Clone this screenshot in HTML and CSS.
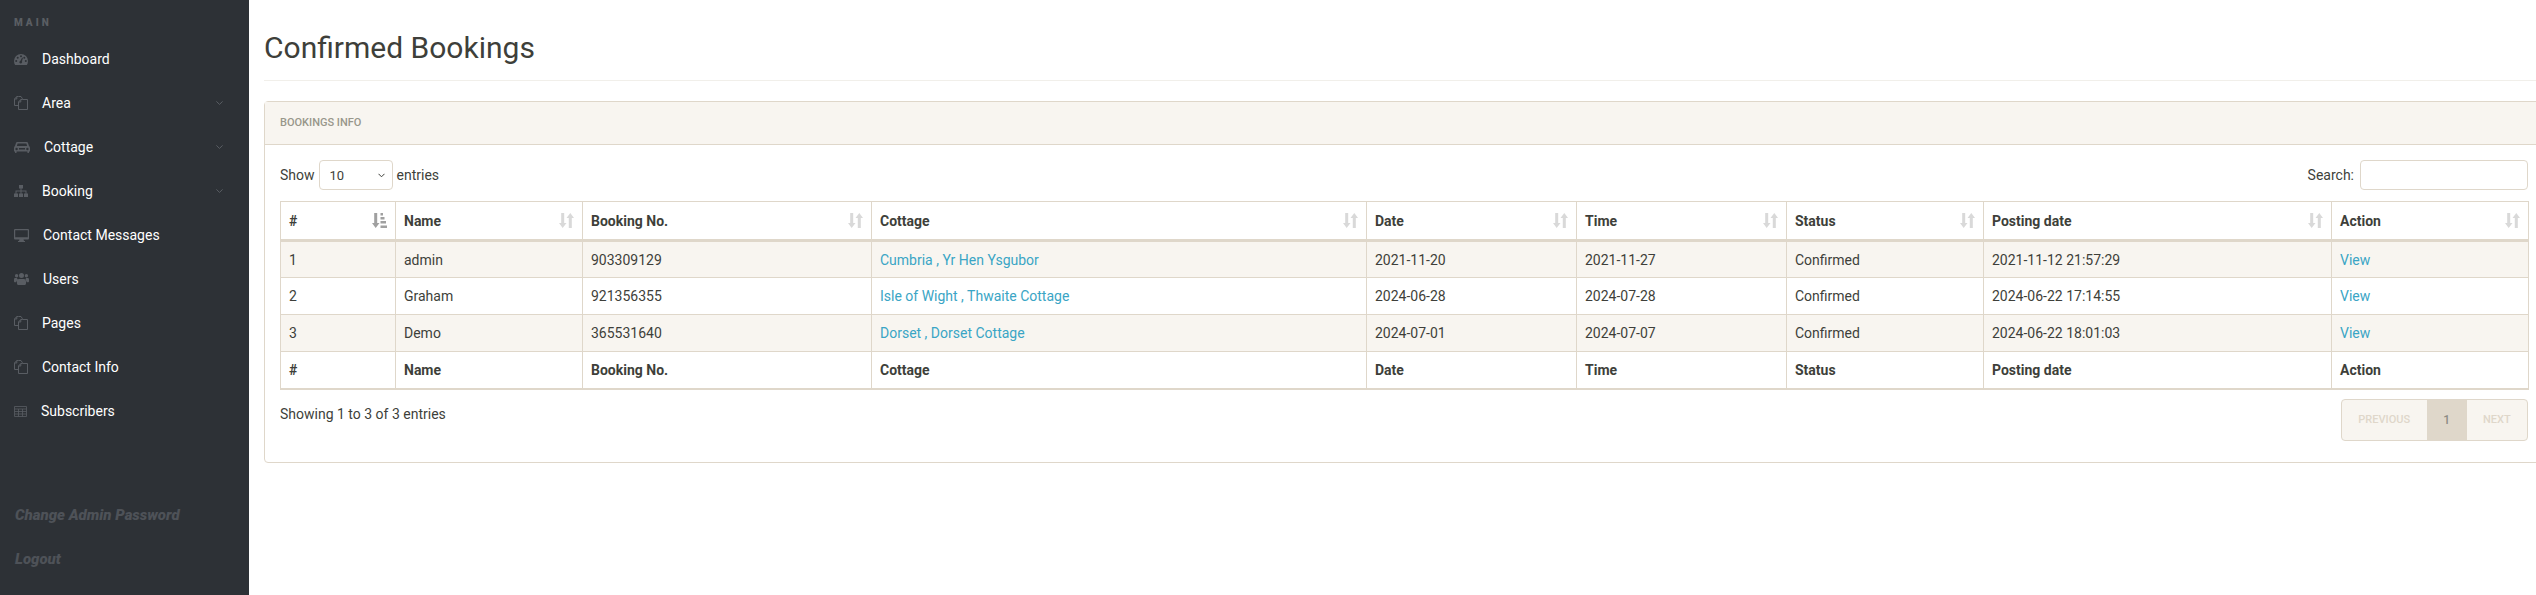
FILE: index.html
```html
<!DOCTYPE html>
<html lang="en">
<head>
<meta charset="utf-8">
<title>Confirmed Bookings</title>
<link rel="stylesheet" href="styles.css">
</head>
<body>
<svg class="defs" width="0" height="0" aria-hidden="true">
  <defs>
    <symbol id="i-files" viewBox="0 0 14 14">
      <path d="M4.500.5H2.800L.5 3v6.500h4M2.800.5V3H.5M4.500.5H7L8.300 2.500V3.500M8.500 3.500H6.800L4.500 6v7.500h9v-10h-5zM6.800 3.500V6H4.500" fill="none" stroke="currentColor" stroke-width="1"/>
    </symbol>
    <symbol id="i-sort" viewBox="0 0 15 15">
      <path d="M2.200 0h3v10H7.500L3.700 15 0 10h2.200zM9.800 15h3V5H15L11.300 0 7.500 5h2.300z" fill="currentColor"/>
    </symbol>
  </defs>
</svg>
<div class="layout">
  <nav class="sidebar">
    <div class="nav-label">MAIN</div>
    <ul class="nav">
      <li class="nav-item"><svg class="ico w14 h11" viewBox="0 0 14 11"><path d="M7 0a7 7 0 0 0-7 7c0 1.500.4 2.900 1.100 4h11.800c.7-1.100 1.100-2.500 1.100-4a7 7 0 0 0-7-7zM2.200 8a1 1 0 1 1 0-2 1 1 0 0 1 0 2zm1.500-3.200a1 1 0 1 1 0-2 1 1 0 0 1 0 2zM7 3.200a1 1 0 1 1 0-2 1 1 0 0 1 0 2zm1 5.300a1.400 1.400 0 0 1-2.700-.3c0-.6.400-1.100 1-1.300l1.900-3.300.7.300-1 3.500c.3.300.400.700.100 1.100zm2.300-3.700a1 1 0 1 1 0-2 1 1 0 0 1 0 2zM11.800 8a1 1 0 1 1 0-2 1 1 0 0 1 0 2z" fill-rule="evenodd"/></svg><span>Dashboard</span></li>
      <li class="nav-item"><svg class="ico w14 h14 line"><use href="#i-files"/></svg><span>Area</span><svg class="chev" viewBox="0 0 7 4"><path d="M.4.400 3.500 3.400 6.600.4"/></svg></li>
      <li class="nav-item"><svg class="ico w16 h11" viewBox="0 0 16 11"><path d="M3.500 0h9c.8 0 1.400.5 1.600 1.200L15 4c.6.500 1 1.100 1 1.900V9.500h-1v.8a.8.8 0 0 1-1.600 0v-.8H2.600v.8a.8.8 0 0 1-1.600 0v-.8H0V5.900C0 5.100.4 4.500 1 4l.9-2.800C2.100.5 2.700 0 3.500 0zM3.600 1.400 2.900 3.900h10.200l-.7-2.500zM2.600 8.200a1.200 1.200 0 1 0 0-2.400 1.200 1.200 0 0 0 0 2.400zm10.800 0a1.200 1.200 0 1 0 0-2.400 1.200 1.200 0 0 0 0 2.400zM5 6v1.400h6V6z" fill-rule="evenodd"/></svg><span>Cottage</span><svg class="chev" viewBox="0 0 7 4"><path d="M.4.400 3.500 3.400 6.600.4"/></svg></li>
      <li class="nav-item"><svg class="ico w14 h12" viewBox="0 0 14 12"><rect x="5" width="4" height="3.500"/><rect y="8.500" width="4" height="3.500"/><rect x="5" y="8.500" width="4" height="3.500"/><rect x="10" y="8.500" width="4" height="3.500"/><path d="M6.500 3h1v2.500H12.500v3.500h-1V6.500h-4V9h-1V6.500h-4V9h-1V5.500h5z"/></svg><span>Booking</span><svg class="chev" viewBox="0 0 7 4"><path d="M.4.400 3.500 3.400 6.600.4"/></svg></li>
      <li class="nav-item"><svg class="ico w15 h13" viewBox="0 0 15 13"><path d="M1 0h13a1 1 0 0 1 1 1v8.500a1 1 0 0 1-1 1H9.500l.5 1.500h1v1H4v-1h1l.5-1.500H1a1 1 0 0 1-1-1V1a1 1 0 0 1 1-1zm.2 1.200v7h12.600v-7z" fill-rule="evenodd"/></svg><span>Contact Messages</span></li>
      <li class="nav-item"><svg class="ico w15 h12" viewBox="0 0 15 12"><path d="M2.600 1a1.700 1.700 0 1 1 0 3.400 1.700 1.700 0 0 1 0-3.400zm9.800 0a1.700 1.700 0 1 1 0 3.400 1.700 1.700 0 0 1 0-3.400zM7.500 0a2.500 2.500 0 1 1 0 5 2.500 2.500 0 0 1 0-5zM0 6.400C0 5.500.6 5 1.400 5h1.500c.2.800.7 1.500 1.300 2-1 .400-1.700 1.200-1.900 2.200H1C.4 9.200 0 8.800 0 8.200zm15 0c0-.9-.6-1.400-1.400-1.400h-1.500c-.2.800-.7 1.500-1.300 2 1 .400 1.700 1.200 1.900 2.200H14c.6 0 1-.4 1-1zM5 6h5c1.200 0 2 .9 2 2.300v2.200c0 .9-.6 1.500-1.500 1.500h-6C3.600 12 3 11.400 3 10.500V8.300C3 6.900 3.800 6 5 6z"/></svg><span>Users</span></li>
      <li class="nav-item"><svg class="ico w14 h14 line"><use href="#i-files"/></svg><span>Pages</span></li>
      <li class="nav-item"><svg class="ico w14 h14 line"><use href="#i-files"/></svg><span>Contact Info</span></li>
      <li class="nav-item"><svg class="ico w13 h11" viewBox="0 0 13 11"><path d="M.5.500h12v10H.5zM.5 3h12M.5 5.500h12M.5 8h12M4.500 3v7.500M8.500 3v7.500" fill="none" stroke="currentColor" stroke-width=".8"/></svg><span>Subscribers</span></li>
    </ul>
    <ul class="nav-foot">
      <li class="foot-item">Change Admin Password</li>
      <li class="foot-item">Logout</li>
    </ul>
  </nav>
  <main class="main">
    <h1 class="title">Confirmed Bookings</h1>
    <section class="card">
      <header class="card-head">BOOKINGS INFO</header>
      <div class="card-body">
        <div class="controls">
          <label class="length">Show <select class="select"><option>10</option><option>25</option><option>50</option><option>100</option></select> entries</label>
          <label class="search">Search: <input class="input" type="search"></label>
        </div>
        <table class="table">
          <colgroup>
            <col class="c1"><col class="c2"><col class="c3"><col class="c4"><col class="c5"><col class="c6"><col class="c7"><col class="c8"><col class="c9">
          </colgroup>
          <thead>
            <tr>
              <th><div class="th"><span>#</span><svg class="sorted" viewBox="0 0 15 15"><path d="M2.200 0h3v10H7.500L3.700 15 0 10h2.200zM8.500 0H11v2.500H8.500zM8.500 4H12.500v2.500H8.500zM8.500 8H14v2.500H8.500zM8.500 12.500H15V15H8.500z"/></svg></div></th>
              <th><div class="th"><span>Name</span><svg class="sort"><use href="#i-sort"/></svg></div></th>
              <th><div class="th"><span>Booking No.</span><svg class="sort"><use href="#i-sort"/></svg></div></th>
              <th><div class="th"><span>Cottage</span><svg class="sort"><use href="#i-sort"/></svg></div></th>
              <th><div class="th"><span>Date</span><svg class="sort"><use href="#i-sort"/></svg></div></th>
              <th><div class="th"><span>Time</span><svg class="sort"><use href="#i-sort"/></svg></div></th>
              <th><div class="th"><span>Status</span><svg class="sort"><use href="#i-sort"/></svg></div></th>
              <th><div class="th"><span>Posting date</span><svg class="sort"><use href="#i-sort"/></svg></div></th>
              <th><div class="th"><span>Action</span><svg class="sort"><use href="#i-sort"/></svg></div></th>
            </tr>
          </thead>
          <tbody>
            <tr class="odd"><td>1</td><td>admin</td><td>903309129</td><td><a href="#">Cumbria , Yr Hen Ysgubor</a></td><td>2021-11-20</td><td>2021-11-27</td><td>Confirmed</td><td>2021-11-12 21:57:29</td><td><a href="#">View</a></td></tr>
            <tr><td>2</td><td>Graham</td><td>921356355</td><td><a href="#">Isle of Wight , Thwaite Cottage</a></td><td>2024-06-28</td><td>2024-07-28</td><td>Confirmed</td><td>2024-06-22 17:14:55</td><td><a href="#">View</a></td></tr>
            <tr class="odd"><td>3</td><td>Demo</td><td>365531640</td><td><a href="#">Dorset , Dorset Cottage</a></td><td>2024-07-01</td><td>2024-07-07</td><td>Confirmed</td><td>2024-06-22 18:01:03</td><td><a href="#">View</a></td></tr>
          </tbody>
          <tfoot>
            <tr><th>#</th><th>Name</th><th>Booking No.</th><th>Cottage</th><th>Date</th><th>Time</th><th>Status</th><th>Posting date</th><th>Action</th></tr>
          </tfoot>
        </table>
        <div class="below">
          <div class="info">Showing 1 to 3 of 3 entries</div>
          <div class="pager">
            <span class="page off">PREVIOUS</span>
            <span class="page cur">1</span>
            <span class="page off">NEXT</span>
          </div>
        </div>
      </div>
    </section>
  </main>
</div>
</body>
</html>
```
FILE: styles.css
```css
* { box-sizing: border-box; }
html, body { margin: 0; padding: 0; height: 100%; overflow: hidden; background: #fff; }
body { font-family: Roboto, "Liberation Sans", sans-serif; font-size: 14px; color: #3e3f3a; }
.defs { display: block; height: 0; }
.layout { display: flex; height: 595px; }

.sidebar { flex: 0 0 249px; background: #2d3136; display: flex; flex-direction: column; padding-top: 16px; }
.nav-label { font-size: 10px; font-weight: 900; letter-spacing: 3px; color: #5a5e63; padding-left: 14px; line-height: 14px; height: 21px; }
.nav, .nav-foot { list-style: none; margin: 0; padding: 0; }
.nav-item { display: flex; align-items: center; height: 44px; padding-left: 14px; color: #fff; position: relative; }
.ico { fill: #595d63; color: #595d63; flex: none; margin-right: 14px; }
.w13 { width: 13px; }
.w14 { width: 14px; }
.w15 { width: 15px; }
.w16 { width: 16px; }
.h11 { height: 11px; }
.h12 { height: 12px; }
.h13 { height: 13px; }
.h14 { height: 14px; }
.chev { width: 7px; height: 4px; fill: none; stroke: #5a5e63; stroke-width: 1; margin-left: auto; margin-right: 26px; }
.nav-foot { margin-top: 60px; }
.foot-item { height: 44px; line-height: 44px; padding-left: 15px; font-size: 15px; font-weight: 900; font-style: italic; color: #4e5258; }

.main { flex: 1; min-width: 0; padding-left: 15px; overflow: hidden; }
.title { margin: 0; width: 2280px; height: 81px; border-bottom: 1px solid #f1efea; padding-top: 30px; font-size: 30px; line-height: 36px; font-weight: 400; color: #3e3f3a; }
.card { margin-top: 20px; width: 2280px; height: 362px; border: 1px solid #dfd7ca; border-radius: 4px; }
.card-head { height: 43px; background: #f8f5f0; border-bottom: 1px solid #dfd7ca; padding-left: 15px; font-size: 11px; font-weight: 500; line-height: 42px; color: #98978b; }
.card-body { padding: 15px 15px 0 15px; }
.controls { display: flex; justify-content: space-between; align-items: center; height: 30px; margin-bottom: 11px; }
.length, .search { display: flex; align-items: center; gap: 4px; }
.search { gap: 6px; }
.select { appearance: none; width: 74px; height: 30px; border: 1px solid #dfd7ca; border-radius: 4px; color: #3e3f3a; font: 13px Roboto, sans-serif; padding-left: 10px; margin: 0; background: #fff url("data:image/svg+xml,%3Csvg xmlns='http://www.w3.org/2000/svg' width='7' height='5'%3E%3Cpath d='M.5.8 3.500 3.800 6.500.8' fill='none' stroke='%233e3f3a' stroke-width='1'/%3E%3C/svg%3E") no-repeat right 7px center; }
.input { width: 168px; height: 30px; border: 1px solid #dfd7ca; border-radius: 4px; background: #fff; padding: 0 6px; margin: 0; }

.table { border-collapse: collapse; table-layout: fixed; width: 2248px; border: 1px solid #dfd7ca; }
.c1 { width: 115px; } .c2 { width: 187px; } .c3 { width: 289px; } .c4 { width: 495px; }
.c5 { width: 210px; } .c6 { width: 210px; } .c7 { width: 197px; } .c8 { width: 348px; } .c9 { width: 197px; }
th, td { border: 1px solid #dfd7ca; padding: 0 8px; height: 37px; text-align: left; }
th { font-weight: 700; }
thead th { border-bottom-width: 3px; height: 39px; }
tfoot th { border-bottom-width: 2px; border-top-width: 1px; }
.th { display: flex; align-items: center; justify-content: space-between; }
.sort { width: 15px; height: 15px; color: #d9d9d9; }
.sorted { width: 15px; height: 15px; fill: #a0a0a0; }
.odd td { background: #f8f5f0; }
a { color: #3aa5c5; text-decoration: none; }

.below { display: flex; justify-content: space-between; align-items: flex-start; padding-top: 9px; }
.info { line-height: 30px; }
.pager { display: flex; height: 42px; border: 1px solid #dfd7ca; border-radius: 4px; overflow: hidden; background: #f8f5f0; }
.page { display: flex; align-items: center; justify-content: center; font-size: 11px; font-weight: 500; padding: 0 16.4px; }
.off { color: #dfd7ca; }
.cur { background: #dfd7ca; color: #8e8c84; font-size: 12px; width: 40px; padding: 0; }
```
